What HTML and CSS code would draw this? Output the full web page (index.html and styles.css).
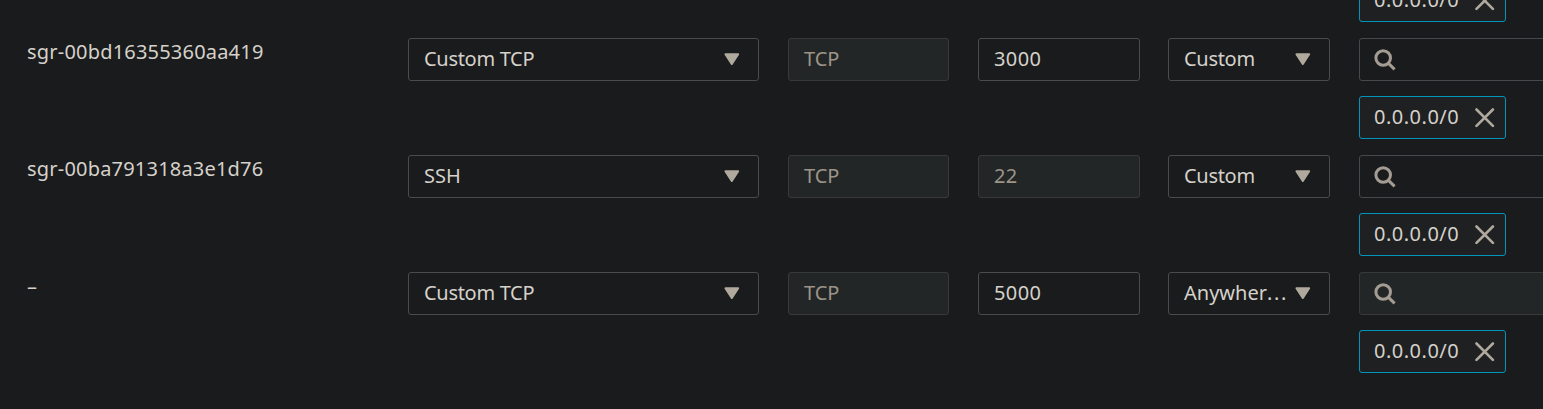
FILE: index.html
```html
<!DOCTYPE html>
<html lang="en">
<head>
<meta charset="utf-8">
<title>Inbound rules</title>
<link rel="stylesheet" href="styles.css">
</head>
<body>
<svg class="defs" aria-hidden="true">
  <symbol id="caret" viewBox="0 0 16 13"><path d="M1.3 1.2h13L7.8 11.2z" fill="currentColor" stroke="currentColor" stroke-width="1.7" stroke-linejoin="round"/></symbol>
  <symbol id="search" viewBox="0 0 22 22"><circle cx="9.2" cy="9" r="7.3" fill="none" stroke="currentColor" stroke-width="3"/><path d="M14.2 14.2l6.4 6.2" stroke="currentColor" stroke-width="3"/></symbol>
  <symbol id="close" viewBox="0 0 20 20"><path d="M1.5 1.5l16.4 16.4M17.9 1.5L1.5 17.9" stroke="currentColor" stroke-width="2.6" stroke-linecap="round"/></symbol>
</svg>
<main class="rules">
  <section class="rule rule-clipped">
    <div class="source"><div class="chip"><span class="cidr">0.0.0.0/0</span><svg class="close"><use href="#close"/></svg></div></div>
  </section>
  <section class="rule">
    <div class="rule-id">sgr-00bd16355360aa419</div>
    <div class="field type"><span class="name">Custom TCP</span><svg class="caret"><use href="#caret"/></svg></div>
    <div class="field protocol disabled"><span>TCP</span></div>
    <div class="field port"><span class="number">3000</span></div>
    <div class="field origin"><span class="name">Custom</span><svg class="caret"><use href="#caret"/></svg></div>
    <div class="source">
      <div class="field search-field"><svg class="search"><use href="#search"/></svg></div>
      <div class="chip"><span class="cidr">0.0.0.0/0</span><svg class="close"><use href="#close"/></svg></div>
    </div>
  </section>
  <section class="rule">
    <div class="rule-id">sgr-00ba791318a3e1d76</div>
    <div class="field type"><span>SSH</span><svg class="caret"><use href="#caret"/></svg></div>
    <div class="field protocol disabled"><span>TCP</span></div>
    <div class="field port disabled"><span class="number">22</span></div>
    <div class="field origin"><span class="name">Custom</span><svg class="caret"><use href="#caret"/></svg></div>
    <div class="source">
      <div class="field search-field"><svg class="search"><use href="#search"/></svg></div>
      <div class="chip"><span class="cidr">0.0.0.0/0</span><svg class="close"><use href="#close"/></svg></div>
    </div>
  </section>
  <section class="rule">
    <div class="rule-id empty">–</div>
    <div class="field type"><span class="name">Custom TCP</span><svg class="caret"><use href="#caret"/></svg></div>
    <div class="field protocol disabled"><span>TCP</span></div>
    <div class="field port"><span class="number">5000</span></div>
    <div class="field origin"><span class="anywhere">Anywher<span class="dots">...</span></span><svg class="caret"><use href="#caret"/></svg></div>
    <div class="source">
      <div class="field search-field disabled"><svg class="search"><use href="#search"/></svg></div>
      <div class="chip"><span class="cidr">0.0.0.0/0</span><svg class="close"><use href="#close"/></svg></div>
    </div>
  </section>
</main>
</body>
</html>
```
FILE: styles.css
```css
* { box-sizing: border-box; }
body {
  margin: 0;
  height: 409px;
  overflow: hidden;
  background: #1a1b1c;
  color: #d5d1cb;
  font: 450 20px/28px "Noto Sans", sans-serif;
}
.defs { display: none; }
.rules { width: 1563px; }
.rule {
  display: grid;
  grid-template-columns: 381px 380px 190px 190px 191px 204px;
  padding-left: 27px;
  height: 117px;
  align-items: start;
  white-space: nowrap;
}
.rule-clipped {
  display: flex;
  align-items: flex-end;
  height: 38px;
  padding: 0 0 16px 1359px;
}
.rule-id { letter-spacing: 0.2px; }
.empty { padding-top: 1px; }
.field {
  display: flex;
  align-items: center;
  justify-content: space-between;
  height: 43px;
  padding: 0 18px 0 15px;
  border: 1px solid #4a4b4c;
  border-radius: 3px;
}
.field > span, .chip > span { padding-bottom: 2px; }
.type { width: 351px; }
.protocol { width: 161px; }
.port, .origin { width: 162px; }
.disabled {
  background: #232627;
  border-color: #383a3a;
  color: #9d9488;
}
.field.protocol > span, .field.port > span { padding-bottom: 1px; }
.source { display: grid; row-gap: 15px; justify-items: start; }
.search-field { width: 204px; padding-left: 14px; border-color: #45494b; }
.search-field.disabled { border-color: #383a3a; }
.chip {
  display: flex;
  align-items: center;
  justify-content: space-between;
  width: 147px;
  height: 43px;
  padding: 0 10px 0 14px;
  border: 1px solid #0096bb;
  border-radius: 3px;
  background: #1e2021;
}
.caret { width: 16px; height: 13px; color: #b0a99d; }
.search { width: 22px; height: 22px; color: #a49c92; }
.close { width: 20px; height: 20px; color: #b0a99d; }
.name { letter-spacing: -0.3px; }
.number { letter-spacing: 0.4px; }
.cidr { letter-spacing: 0.5px; }
.dots { letter-spacing: 1.6px; }
```
